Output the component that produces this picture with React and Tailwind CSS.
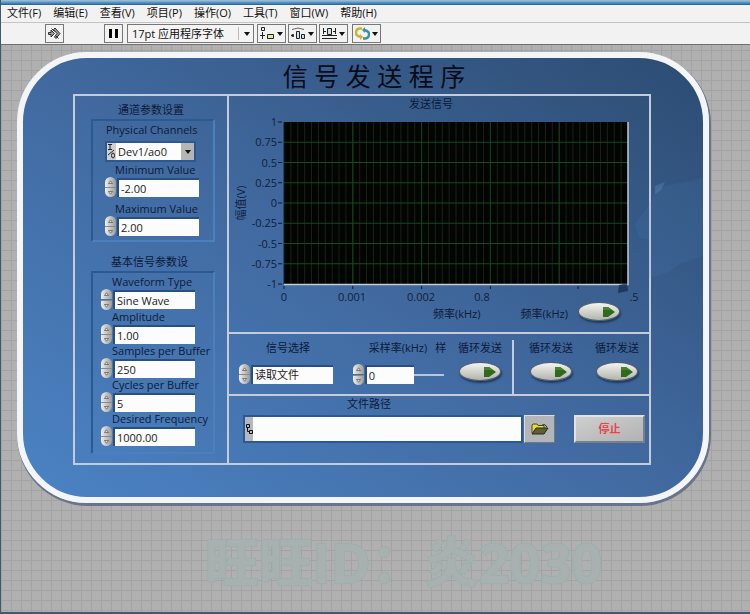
import { useState } from 'react';

const MENUS = ['文件(F)', '编辑(E)', '查看(V)', '项目(P)', '操作(O)', '工具(T)', '窗口(W)', '帮助(H)'];

const Y_TICKS = ['1', '0.75', '0.5', '0.25', '0', '-0.25', '-0.5', '-0.75', '-1'];

const toolButton = 'flex h-[19px] items-center justify-center border border-[#777] bg-[#f2f2f2]';
const fieldBox = 'h-[19px] border-t-2 border-l-2 border-[#264f82] bg-[#fcfcfc] px-0.5 text-[11px] leading-4 text-[#222] outline-none appearance-none';
const groupBox = 'border-t-2 border-l-2 border-b-2 border-r-2 border-t-[#2b5a93] border-l-[#2b5a93] border-b-[#4c80bd] border-r-[#4c80bd]';

function Caret() {
  return (
    <svg width="6" height="4" viewBox="0 0 6 4" aria-hidden="true">
      <path d="M0 0h6L3 4z" fill="#111" />
    </svg>
  );
}

function Spinner({ onUp, onDown, label, split }) {
  const half = 'flex h-[10px] w-[11px] items-center justify-center from-[#f0f0f0] to-[#9a9a9a] bg-linear-to-r';
  return (
    <div className={`flex flex-col ${split ? 'gap-px' : ''}`}>
      <button type="button" onClick={onUp} aria-label={`${label} +`} className={`${half} rounded-t-full`}>
        <svg width="5" height="4" viewBox="0 0 5 4"><path d="M.5 3.5 2.5.8l2 2.7z" fill="#ddd" stroke="#555" strokeWidth=".7" /></svg>
      </button>
      <button type="button" onClick={onDown} aria-label={`${label} -`} className={`${half} rounded-b-full border-t border-[#8a8a8a]`}>
        <svg width="5" height="4" viewBox="0 0 5 4"><path d="M.5.5 2.5 3.2l2-2.7z" fill="#ddd" stroke="#555" strokeWidth=".7" /></svg>
      </button>
    </div>
  );
}

function NumberField({ id, label, initial, digits = 0, split, width = 'w-[82px]' }) {
  const [value, setValue] = useState(initial);

  const step = (by) => setValue((Number(value) + by).toFixed(digits));

  return (
    <div className="flex items-center gap-px">
      <Spinner label={label} split={split} onUp={() => step(1)} onDown={() => step(-1)} />
      <input id={id} type="text" value={value} onChange={(e) => setValue(e.target.value)} className={`${fieldBox} ${width}`} />
    </div>
  );
}

function RingField({ id, label, options, split }) {
  const [index, setIndex] = useState(0);

  const step = (by) => setIndex((index + by + options.length) % options.length);

  return (
    <div className="flex items-center gap-px">
      <Spinner label={label} split={split} onUp={() => step(1)} onDown={() => step(-1)} />
      <select id={id} value={index} onChange={(e) => setIndex(Number(e.target.value))} className={`${fieldBox} w-[82px]`}>
        {options.map((o, i) => (
          <option key={o} value={i}>{o}</option>
        ))}
      </select>
    </div>
  );
}

function Toggle({ label }) {
  const [on, setOn] = useState(false);
  return (
    <button
      type="button"
      aria-label={label}
      aria-pressed={on}
      onClick={() => setOn(!on)}
      className="flex h-[19px] w-[42px] items-center justify-end rounded-[50%] border border-[#55616f] bg-linear-to-b from-[#f4f4f0] to-[#b4b4ae] pr-1 shadow-[1px_2px_2px_#1d3a60]"
    >
      <svg width="12" height="10" viewBox="0 0 12 10" aria-hidden="true">
        <path d="M0 0h5l7 5-7 5H0z" fill={on ? '#4fd12c' : '#2f6b1c'} />
        <path d="M0 0h5l4 3H0z" fill="#4b7f35" />
      </svg>
    </button>
  );
}

function LabelledToggle({ label }) {
  return (
    <div className="flex flex-col items-center gap-1.5">
      <span className="text-[11px] leading-4 whitespace-nowrap">{label}</span>
      <Toggle label={label} />
    </div>
  );
}

function SignalChart() {
  const left = 55;
  const top = 10;
  const w = 344;
  const h = 162;
  const minor = Array.from({ length: 50 }, (_, i) => left + (i * w) / 50);
  const major = [1, 2, 3, 4].map((i) => left + (i * w) / 5);

  return (
    <svg viewBox="0 0 420 194" className="block h-auto w-full" role="img" aria-label="发送信号">
      <rect x={left} y={top} width={w} height={h} fill="#030503" />
      {minor.map((x) => (
        <line key={x} x1={x} x2={x} y1={top} y2={top + h} stroke="#1a211b" />
      ))}
      {major.map((x) => (
        <line key={x} x1={x} x2={x} y1={top} y2={top + h} stroke="#17431f" />
      ))}
      {Y_TICKS.map((t, i) => {
        const y = top + (i * h) / 8;
        return (
          <g key={t}>
            {i > 0 && i < 8 && <line x1={left} x2={left + w} y1={y} y2={y} stroke="#174a1e" />}
            <line x1={left - 6} x2={left - 2} y1={y} y2={y} stroke="#0b1a33" />
            <text x={left - 7} y={y + 4} textAnchor="end" fontSize="11" fill="#10203a">{t}</text>
          </g>
        );
      })}
      <path d={`M${left} ${top + h + 0.5}h${w}V${top}`} fill="none" stroke="#c5ccd4" strokeWidth="1.5" />
      {[0, 1, 2, 3].map((i) => (
        <line key={i} x1={left + (i * w) / 5} x2={left + (i * w) / 5} y1={top + h + 2} y2={top + h + 5} stroke="#0b1a33" />
      ))}
      <line x1="349" x2="349" y1={top + h + 2} y2={top + h + 5} stroke="#0b1a33" />
      <g fontSize="11" fill="#10203a" textAnchor="middle">
        <text x="55" y="189">0</text>
        <text x="123" y="189">0.001</text>
        <text x="192" y="189">0.002</text>
        <text x="253" y="189">0.8</text>
        <text x="405" y="189">.5</text>
        <text transform="translate(16 91) rotate(-90)">幅值(V)</text>
      </g>
      <path d="M390 173l8-2 1 8-10 2z" fill="#13284a" opacity=".7" />
    </svg>
  );
}

function MenuBar() {
  return (
    <nav className="flex h-[18px] items-center gap-3 border-b border-[#c4c4c4] bg-[#f2f2f2] pl-1.5 text-[11px] text-[#111]">
      {MENUS.map((m) => (
        <button key={m} type="button" className="whitespace-nowrap">{m}</button>
      ))}
    </nav>
  );
}

function Toolbar() {
  return (
    <div className="flex h-[22px] items-center border-b border-[#6f6f6f] bg-[#f2f2f2] pl-11">
      <button type="button" aria-label="运行" className={`${toolButton} w-[19px]`}>
        <svg width="13" height="13" viewBox="0 0 13 13" fill="#999" stroke="#333">
          <path d="M.5 5.500h2.500V3l3.500 3.500L3 10V7.500H.5z" />
          <path d="M5.500 2.500 7 1l5 5.500-4 5-1.500-1.500 2.500-3.500z" />
          <path d="M3.500 1.500l3 3M7.500 8.500l3 3" />
        </svg>
      </button>
      <button type="button" aria-label="暂停" className={`${toolButton} ml-10 w-[19px] gap-[3px]`}>
        <span className="h-[9px] w-[3px] bg-black" />
        <span className="h-[9px] w-[3px] bg-black" />
      </button>
      <div className="relative ml-1">
        <select aria-label="字体" className="block h-[19px] w-[127px] appearance-none border border-[#777] bg-[#f4f4f4] pl-1 text-[11px] leading-4 text-[#111] outline-none">
          <option>17pt 应用程序字体</option>
        </select>
        <span className="pointer-events-none absolute inset-y-0 right-0 my-[3px] flex w-4 items-center justify-center border-l border-[#bbb]">
          <Caret />
        </span>
      </div>
      <div className="ml-[3px] flex gap-0.5">
        <button type="button" aria-label="对齐对象" className={`${toolButton} w-[29px] gap-0.5`}>
          <svg width="15" height="13" viewBox="0 0 15 13" fill="none" stroke="#222">
            <path d="M1.500.5h3v3h-3zM2.500 5v7M0 8.500h5" />
            <path d="M7.500 7.500h6v4h-6z" fill="#e4e89a" />
          </svg>
          <Caret />
        </button>
        <button type="button" aria-label="分布对象" className={`${toolButton} w-[29px] gap-0.5`}>
          <svg width="15" height="13" viewBox="0 0 15 13" fill="none" stroke="#222">
            <path d="M1 2.500q6-3 12 0" stroke="#666" />
            <path d="M0 8.500h3M2 7v3" strokeWidth="1.500" />
            <path d="M5.500 4.500h3v7h-3zM10.500 7.500h3v4h-3z" fill="#c8e0e8" />
          </svg>
          <Caret />
        </button>
        <button type="button" aria-label="调整对象大小" className={`${toolButton} w-[29px] gap-0.5`}>
          <svg width="15" height="13" viewBox="0 0 15 13" fill="none" stroke="#222">
            <path d="M1.500 1v6M13.500 1v6M1 4.500h3M11 4.500h3M0 8.500h15M0 11.500h15" />
            <path d="M5.500 1.500h4v6h-4z" fill="#c8e0e8" />
          </svg>
          <Caret />
        </button>
      </div>
      <button type="button" aria-label="重新排序" className={`${toolButton} ml-1 w-[29px] gap-0.5`}>
        <svg width="15" height="13" viewBox="0 0 15 13" fill="none" strokeWidth="2.500">
          <path d="M7 1.500H5a4 4 0 0 0-2 7.500l3 1" stroke="#c9b52a" />
          <path d="M5 7l3 3-3 3z" fill="#c9b52a" />
          <path d="M8 11.500h2a4 4 0 0 0 2-7.500l-3-1" stroke="#3b8fa8" />
          <path d="M10 0 7 3l3 3z" fill="#3b8fa8" />
        </svg>
        <Caret />
      </button>
    </div>
  );
}

function ParameterColumn() {
  return (
    <section className="border-r-2 border-[#c3ccd8] pt-1.5 pr-3 pl-4 text-[11px]">
      <h2 className="pr-1 text-center leading-4">通道参数设置</h2>
      <div className={`${groupBox} mt-px pb-1 pl-3`}>
        <label htmlFor="channel" className="block pt-px pl-px leading-[15px]">Physical Channels</label>
        <div className="mt-1 flex h-[21px] w-[91px] border-2 border-[#2b5a93]">
          <span className="flex w-[9px] items-center justify-center bg-[#cfcfcf]">
            <svg width="9" height="17" viewBox="0 0 9 17" fill="none" stroke="#222" aria-hidden="true">
              <path d="M1 1.500h4M3 1.500v5M1 6.500h4M1 12l6-5" />
              <ellipse cx="6" cy="12.500" rx="1.500" ry="2.500" />
            </svg>
          </span>
          <div className="relative flex-1">
            <select id="channel" className="block h-full w-full appearance-none bg-[#fcfcfc] pl-0.5 leading-4 text-[#222] outline-none">
              <option>Dev1/ao0</option>
            </select>
            <span className="pointer-events-none absolute inset-y-0 right-0 flex w-[13px] items-center justify-center bg-[#b5b5b5]">
              <Caret />
            </span>
          </div>
        </div>
        <label htmlFor="min" className="block pl-2.5 leading-[15px]">Minimum Value</label>
        <NumberField id="min" label="Minimum Value" initial="-2.00" digits={2} />
        <label htmlFor="max" className="block pt-1 pl-2.5 leading-[15px]">Maximum Value</label>
        <NumberField id="max" label="Maximum Value" initial="2.00" digits={2} />
      </div>

      <h2 className="mt-3 pl-5 leading-4">基本信号参数设</h2>
      <div className={`${groupBox} mt-px flex flex-col pt-0.5 pb-1.5 pl-2 leading-[14px] whitespace-nowrap`}>
        <label htmlFor="wave" className="pl-[11px]">Waveform Type</label>
        <RingField id="wave" label="Waveform Type" split options={['Sine Wave', 'Square Wave', 'Triangle Wave', 'Sawtooth Wave']} />
        <label htmlFor="amp" className="pl-[11px]">Amplitude</label>
        <NumberField id="amp" label="Amplitude" initial="1.00" digits={2} />
        <label htmlFor="samples" className="pl-[11px]">Samples per Buffer</label>
        <NumberField id="samples" label="Samples per Buffer" initial="250" />
        <label htmlFor="cycles" className="pl-[11px]">Cycles per Buffer</label>
        <NumberField id="cycles" label="Cycles per Buffer" initial="5" />
        <label htmlFor="freq" className="pl-[11px]">Desired Frequency</label>
        <NumberField id="freq" label="Desired Frequency" initial="1000.00" digits={2} />
      </div>
    </section>
  );
}

function SignalRow() {
  return (
    <section className="flex border-t-2 border-[#c3ccd8] text-[11px]">
      <div className="flex flex-1 justify-between pt-1.5 pr-2.5 pb-[9px] pl-2.5">
        <div>
          <label htmlFor="signal" className="mb-2 block pl-[27px] leading-4">信号选择</label>
          <RingField id="signal" label="信号选择" options={['读取文件', '基本信号']} />
        </div>
        <div className="pl-2">
          <div className="mb-2 flex gap-2 pl-4 leading-4 whitespace-nowrap">
            <label htmlFor="rate">采样率(kHz)</label>
            <span>样</span>
          </div>
          <div className="flex items-center">
            <NumberField id="rate" label="采样率" initial="0" split width="w-[49px]" />
            <span className="h-0.5 w-[30px] bg-[#b9c6d6]" />
          </div>
        </div>
        <LabelledToggle label="循环发送" />
      </div>
      <div className="mt-1.5 flex gap-[22px] border-l-2 border-[#c3ccd8] pr-2.5 pl-[15px]">
        <LabelledToggle label="循环发送" />
        <LabelledToggle label="循环发送" />
      </div>
    </section>
  );
}

function FileRow() {
  return (
    <section className="border-t-2 border-[#c3ccd8] pr-1 pb-5 pl-[14px] text-[11px]">
      <label htmlFor="path" className="block pr-[150px] text-center leading-4">文件路径</label>
      <div className="mt-[3px] flex items-center">
        <div className="flex h-7 flex-1 border-2 border-[#2b5a93]">
          <span className="flex w-2 items-center justify-center bg-[#b5b9bd]">
            <svg width="7" height="10" viewBox="0 0 7 10" fill="none" stroke="#111" aria-hidden="true">
              <path d="M.5.5h3v3h-3zM3.500 6.500h3v3h-3zM1.500 4v3.500H3" />
            </svg>
          </span>
          <input id="path" type="text" className="min-w-0 flex-1 bg-[#fcfcfc] px-1 text-[#222] outline-none" />
        </div>
        <button type="button" aria-label="浏览" className="ml-px flex h-7 w-[31px] items-center justify-center border border-t-[#dcdcdc] border-l-[#dcdcdc] border-r-[#6f7882] border-b-[#6f7882] bg-[#b3b5b8]">
          <svg width="18" height="12" viewBox="0 0 18 12">
            <path d="M1 10V2l1-1h4l1 1.500h6V5" fill="#e6dc3a" stroke="#4a4a18" />
            <path d="M1 11 5 5h12l-4 6z" fill="#5d5f35" stroke="#2a2a1a" />
            <path d="M11 2q3-2 5 2" fill="none" stroke="#333" />
          </svg>
        </button>
        <button type="button" className="ml-[19px] h-7 w-[71px] border-2 border-t-[#e2e2e2] border-l-[#e2e2e2] border-r-[#777f88] border-b-[#777f88] bg-linear-to-br from-[#cfcfcf] to-[#b2b2b2] font-bold text-[#e8444a]">
          停止
        </button>
      </div>
    </section>
  );
}

// faint map pattern printed on the right of the panel
function PanelPattern() {
  return (
    <svg width="68" height="110" viewBox="0 0 68 110" className="pointer-events-none absolute top-[116px] right-0" aria-hidden="true">
      <path d="M68 4 40 10 22 14 12 34 0 50 4 64 14 66 14 104 34 98 44 90 68 82z" fill="#5b93da" opacity=".1" />
      <path d="M20 12l10-4-4 8-6 4z" fill="#8ab4ea" opacity=".2" />
    </svg>
  );
}

export default function App() {
  return (
    <div className="flex min-h-screen flex-col border-b-2 border-l border-[#3d5a72] bg-[#b0b0b0] bg-[linear-gradient(#a3a3a3_1px,transparent_1px),linear-gradient(90deg,#a3a3a3_1px,transparent_1px)] bg-size-[10px_10px] font-['Open_Sans','Noto_Sans_CJK_SC',sans-serif] text-[#0c1a38]">
      <div className="h-[5px] bg-linear-to-b from-[#9cc8e0] to-[#1f5f9f]" />
      <MenuBar />
      <Toolbar />

      <main className="relative mt-[7px] mr-[41px] ml-4 rounded-[70px] border-6 border-[#f3f5f8] bg-linear-to-tr from-[#4b83c4] via-[#41699f] to-[#2c4c72] pr-[52px] pb-8 pl-[50px] shadow-[1px_2px_0_1px_#68748c]">
        <PanelPattern />
        <h1 className="pl-6 text-center text-[25px] leading-9 text-[#080c18]">信 号 发 送 程 序</h1>
        <div className="grid grid-cols-[154px_1fr] border-2 border-[#c3ccd8]">
          <ParameterColumn />
          <div className="flex flex-col">
            <section className="text-[11px]">
              <h2 className="pr-4 text-center leading-4">发送信号</h2>
              <SignalChart />
              <div className="-mt-1 flex h-[30px] justify-end pr-[29px]">
                <span className="mt-1 mr-10 leading-4">频率(kHz)</span>
                <span className="mt-1 mr-2.5 leading-4">频率(kHz)</span>
                <Toggle label="频率(kHz)" />
              </div>
            </section>
            <SignalRow />
            <FileRow />
          </div>
        </div>
      </main>

      <p className="mt-[27px] pl-14 text-center text-[54px] leading-[64px] font-bold text-[#a9b1b0] [-webkit-text-stroke:2px_#98b1ad] [paint-order:stroke_fill]">
        旺旺ID：炎2030
      </p>
    </div>
  );
}
